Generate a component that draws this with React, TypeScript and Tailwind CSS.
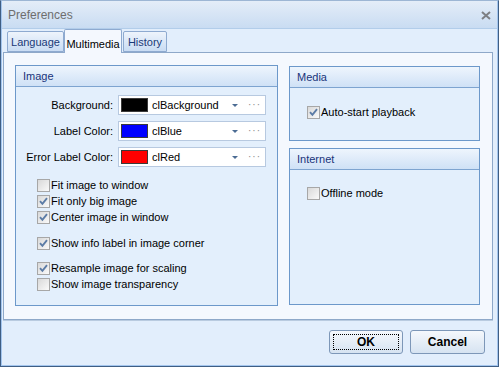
import React from "react";

type CheckProps = { checked?: boolean; label: string; className?: string };

function Check({ checked, label, className }: CheckProps) {
  return (
    <div className={"flex items-center h-4 " + (className ?? "")}>
      <span className="w-[13px] h-[13px] border border-[#a7a7a7] bg-gradient-to-br from-[#d9d9d9] to-[#fafafa] flex items-center justify-center shrink-0">
        {checked && (
          <svg width="9" height="9" viewBox="0 0 9 9">
            <path d="M1 4.2 L3.4 6.8 L8 1.2" stroke="#5c7ca6" strokeWidth="1.9" fill="none" />
          </svg>
        )}
      </span>
      <span className="ml-[1px] text-black whitespace-nowrap">{label}</span>
    </div>
  );
}

function ColorCombo({ swatch, name }: { swatch: string; name: string }) {
  return (
    <div className="flex items-center h-5 w-[148px] bg-white border border-[#b7c9e0] pl-[2px]">
      <span className={"w-[27px] h-[14px] border border-[#3a3a3a] " + swatch} />
      <span className="ml-[4px] flex-1 text-black">{name}</span>
      <svg width="6" height="3" viewBox="0 0 6 3" className="mr-[10px]">
        <path d="M0 0 H6 L3 3 Z" fill="#4c6c94" />
      </svg>
      <span className="mr-[4px] text-[#8a8a8a] text-[10px] leading-none tracking-[1px]">···</span>
    </div>
  );
}

function Group({ title, className, children }: { title: string; className: string; children?: React.ReactNode }) {
  return (
    <div className={"border border-[#6c98ca] bg-[#e3effc] flex flex-col " + className}>
      <div className="h-[21px] border-b border-[#7ea4d0] bg-gradient-to-b from-[#eef5fd] to-[#cfe1f6] pl-[7px] flex items-center text-[#19347a]">
        {title}
      </div>
      {children}
    </div>
  );
}

export default function App() {
  return (
    <div className="w-[499px] h-[367px] border border-[#3f5e84] border-t-[#9db6d4] bg-[#e2eefc] font-['Liberation_Sans',Arial,sans-serif] text-[11px] overflow-hidden">
      <div className="h-full border-x border-b border-[#a3c5ee] flex flex-col">
        {/* title bar */}
        <div className="h-[28px] border-b border-[#b2cdea] bg-gradient-to-b from-[#e4edf8] to-[#c9dcf2] flex items-center justify-between pl-[6px] pr-[6px] shrink-0">
          <span className="text-[12px] text-[#6e6e6e]">Preferences</span>
          <svg width="10" height="9" viewBox="0 0 10 9" className="mt-[1px]">
            <path d="M1 1 L9 8 M9 1 L1 8" stroke="#7d7f83" strokeWidth="2" />
          </svg>
        </div>

        {/* tabs */}
        <div className="h-[23px] flex items-end pl-[5px] shrink-0 relative z-10">
          <div className="w-[57px] h-[21px] border border-[#8eaad0] rounded-t-[2px] bg-gradient-to-b from-[#eef4fc] to-[#c9dcf3] flex items-center justify-center pt-[2px] text-[#1a3a78]">
            Language
          </div>
          <div className="w-[58px] h-[24px] border border-b-0 border-[#8eaad0] rounded-t-[2px] bg-[#f4f8fe] flex items-start pt-[6px] justify-center text-black -mb-[1px]">
            Multimedia
          </div>
          <div className="w-[44px] h-[21px] ml-[1px] border border-[#8eaad0] rounded-t-[2px] bg-gradient-to-b from-[#eef4fc] to-[#c9dcf3] flex items-center justify-center pt-[2px] text-[#1a3a78]">
            History
          </div>
        </div>

        {/* tab page */}
        <div className="ml-[1px] mr-[4px] h-[268px] border border-[#8ea8c9] bg-[#f4f8fe] shadow-[0_1px_0_#b9cbe0] flex items-start pt-[12px] pl-[11px] gap-[11px] shrink-0">
          <Group title="Image" className="w-[263px] h-[241px]">
            <div className="grid grid-cols-[97px_148px] gap-x-[5px] gap-y-[6px] items-center pt-[8px]">
              <span className="text-right text-black">Background:</span>
              <ColorCombo swatch="bg-black" name="clBackground" />
              <span className="text-right text-black">Label Color:</span>
              <ColorCombo swatch="bg-[#0000ff]" name="clBlue" />
              <span className="text-right text-black whitespace-nowrap">Error Label Color:</span>
              <ColorCombo swatch="bg-[#ff0000]" name="clRed" />
            </div>
            <div className="flex flex-col pl-[21px] mt-[10px]">
              <Check label="Fit image to window" />
              <Check checked label="Fit only big image" />
              <Check checked label="Center image in window" />
              <Check checked label="Show info label in image corner" className="mt-[10px]" />
              <Check checked label="Resample image for scaling" className="mt-[9px]" />
              <Check label="Show image transparency" />
            </div>
          </Group>

          <div className="flex flex-col gap-[7px] mt-[1px]">
            <Group title="Media" className="w-[191px] h-[75px]">
              <div className="pl-[17px] pt-[16px]">
                <Check checked label="Auto-start playback" />
              </div>
            </Group>
            <Group title="Internet" className="w-[191px] h-[157px]">
              <div className="pl-[17px] pt-[15px]">
                <Check label="Offline mode" />
              </div>
            </Group>
          </div>
        </div>

        {/* buttons */}
        <div className="flex justify-end gap-[7px] pr-[12px] mt-[10px]">
          <button className="w-[74px] h-[24px] border border-[#7d97b8] rounded-[3px] bg-gradient-to-b from-[#f5f8fc] to-[#d6e3f1] p-[3px]">
            <span className="w-full h-full border border-dotted border-black flex items-center justify-center font-bold text-[12px] text-black">
              OK
            </span>
          </button>
          <button className="w-[75px] h-[24px] border border-[#7d97b8] rounded-[3px] bg-gradient-to-b from-[#f5f8fc] to-[#d6e3f1] flex items-center justify-center font-bold text-[12px] text-black">
            Cancel
          </button>
        </div>
      </div>
    </div>
  );
}
